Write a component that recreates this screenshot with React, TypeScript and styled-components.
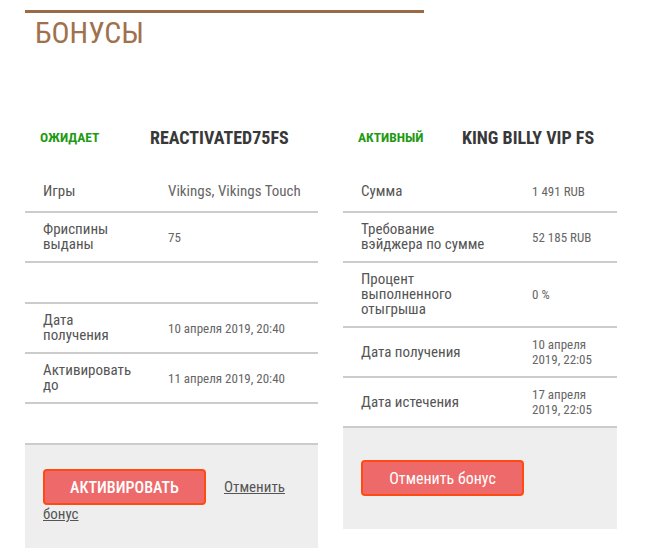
import React from 'react';
import styled, { createGlobalStyle } from 'styled-components';

const GlobalStyle = createGlobalStyle`
	body {
		margin: 0;
		background: #fff;
		font-family: 'Roboto Condensed', 'Liberation Sans Narrow', 'DejaVu Sans Condensed', Roboto, sans-serif;
		color: #555;
	}
`;

const Page = styled.div`
	padding: 10px 0 0 25px;
	width: 648px;
	box-sizing: border-box;
`;

const TitleBar = styled.div`
	width: 399px;
	border-top: 3px solid #9b6b45;
`;

const Title = styled.h1`
	margin: 0;
	padding: 3px 0 0 10px;
	font-size: 30px;
	font-weight: 400;
	line-height: 34px;
	color: #a0714c;
`;

const Cards = styled.div`
	display: flex;
	align-items: flex-start;
	gap: 25px;
	margin-top: 68px;
`;

const Card = styled.div<{ $width: number }>`
	width: ${(p) => p.$width}px;
`;

const CardHeader = styled.div`
	display: flex;
	align-items: center;
	height: 38px;
	padding: 0 15px;
`;

const Status = styled.span<{ $width: number }>`
	width: ${(p) => p.$width}px;
	flex-shrink: 0;
	font-size: 13.5px;
	font-weight: 700;
	color: #1f9a14;
	text-transform: uppercase;
`;

const BonusName = styled.span`
	font-size: 18px;
	font-weight: 700;
	color: #383838;
`;

const Rows = styled.div`
	margin-top: 16px;
`;

const Row = styled.div<{ $cols: string }>`
	display: grid;
	grid-template-columns: ${(p) => p.$cols};
	align-items: center;
	min-height: 41px;
	padding: 9px 0 9px 18px;
	box-sizing: border-box;
	border-bottom: 2px solid #cccccc;
`;

const Label = styled.div<{ $max: number }>`
	max-width: ${(p) => p.$max}px;
	font-size: 15px;
	line-height: 15px;
	color: #555;
`;

const Value = styled.div<{ $large?: boolean }>`
	padding-right: 14px;
	font-size: ${(p) => (p.$large ? 15 : 13)}px;
	line-height: 15px;
	color: #666;
`;

const Footer = styled.div<{ $pad: string }>`
	background: #eeeeee;
	padding: ${(p) => p.$pad};
	line-height: 17px;
`;

const Button = styled.button<{ $upper?: boolean }>`
	display: inline-block;
	vertical-align: middle;
	width: 163px;
	height: 36px;
	background: #ee6a6a;
	border: 2px solid #ff4b12;
	border-radius: 4px;
	color: #fff;
	font-family: inherit;
	font-size: 16px;
	font-weight: ${(p) => (p.$upper ? 500 : 400)};
	text-transform: ${(p) => (p.$upper ? 'uppercase' : 'none')};
	cursor: pointer;
`;

const CancelLink = styled.a`
	margin-left: 18px;
	font-size: 15px;
	color: #555;
	text-decoration: underline;
	vertical-align: middle;
`;

type Item = { label: string; value: string; large?: boolean };

const pending: Item[] = [
	{ label: 'Игры', value: 'Vikings, Vikings Touch', large: true },
	{ label: 'Фриспины выданы', value: '75' },
	{ label: '', value: '' },
	{ label: 'Дата получения', value: '10 апреля 2019, 20:40' },
	{ label: 'Активировать до', value: '11 апреля 2019, 20:40' },
	{ label: '', value: '' },
];

const active: Item[] = [
	{ label: 'Сумма', value: '1 491 RUB' },
	{ label: 'Требование вэйджера по сумме', value: '52 185 RUB' },
	{ label: 'Процент выполненного отыгрыша', value: '0 %' },
	{ label: 'Дата получения', value: '10 апреля 2019, 22:05' },
	{ label: 'Дата истечения', value: '17 апреля 2019, 22:05' },
];

const App = () => {
	return (
		<Page>
			<GlobalStyle />
			<TitleBar>
				<Title>БОНУСЫ</Title>
			</TitleBar>
			<Cards>
				<Card $width={293}>
					<CardHeader>
						<Status $width={110}>Ожидает</Status>
						<BonusName>REACTIVATED75FS</BonusName>
					</CardHeader>
					<Rows>
						{pending.map((r, i) => (
							<Row key={i} $cols="125px 1fr">
								<Label $max={92}>{r.label}</Label>
								<Value $large={r.large}>{r.value}</Value>
							</Row>
						))}
					</Rows>
					<Footer $pad="24px 18px 25px">
						<Button $upper>Активировать</Button>
						<CancelLink href="#">Отменить бонус</CancelLink>
					</Footer>
				</Card>
				<Card $width={274}>
					<CardHeader>
						<Status $width={104}>Активный</Status>
						<BonusName>KING BILLY VIP FS</BonusName>
					</CardHeader>
					<Rows>
						{active.map((r, i) => (
							<Row key={i} $cols="171px 1fr">
								<Label $max={128}>{r.label}</Label>
								<Value>{r.value}</Value>
							</Row>
						))}
					</Rows>
					<Footer $pad="32px 18px 33px">
						<Button>Отменить бонус</Button>
					</Footer>
				</Card>
			</Cards>
		</Page>
	);
};

export default App;
